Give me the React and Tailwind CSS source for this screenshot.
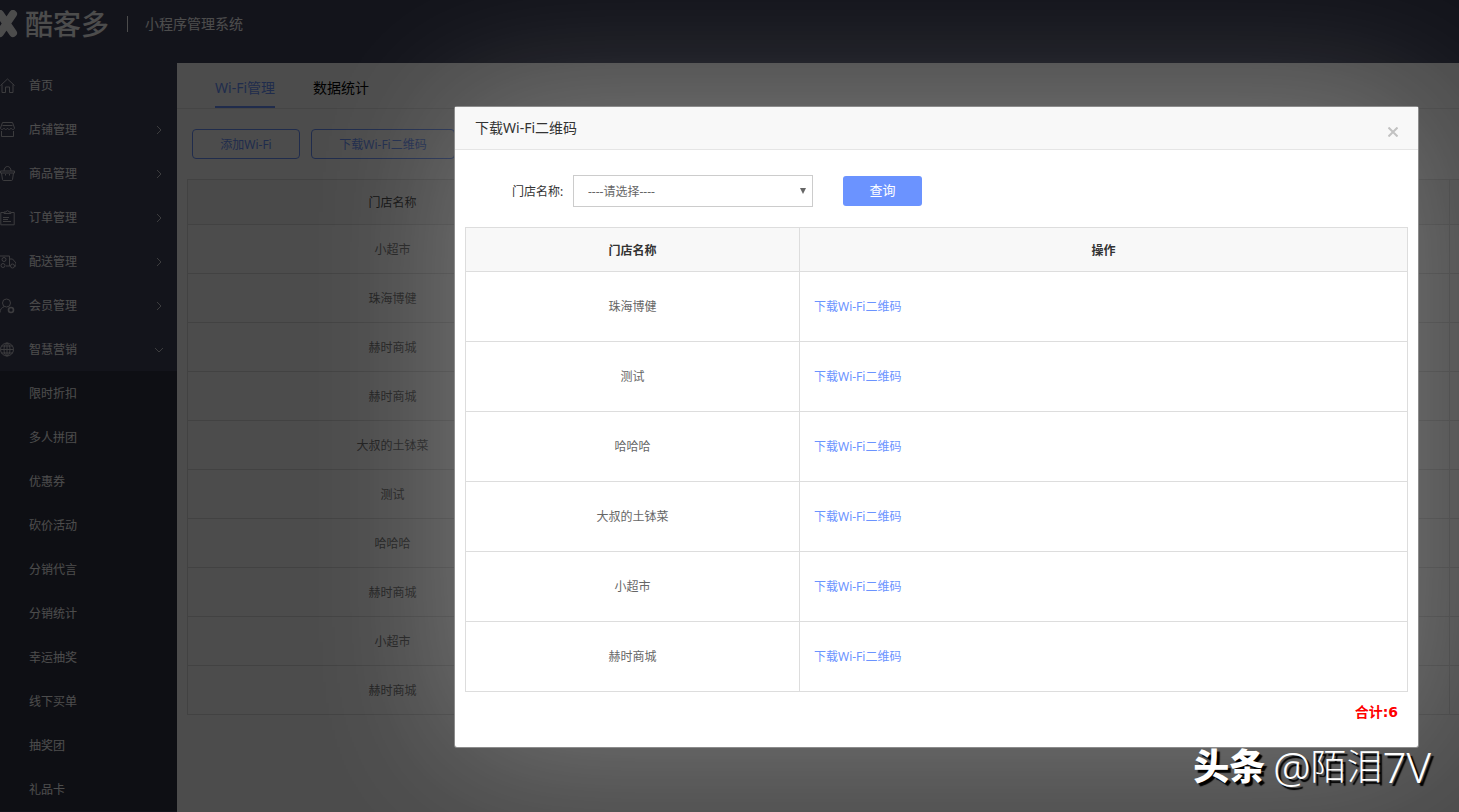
import { useState } from 'react';

const icons = {
  home: <path d="M.5 7.5 7.500 1l7 6.500M2 6.500v8h3.500V9h4v5.500H13v-8" />,
  shop: <path d="M2.500.5h10l2 5.500c0 2-3 2-3.500 0-.5 2-3 2-3.500 0-.5 2-3 2-3.500 0C3.500 8 .5 8 .5 6zM2.500 3.500h10M1.500 9v5.500h12V9" />,
  goods: <path d="M.5 5h14v2h-14zM1.500 7l1 6.500q.2 1 1 1h8q.8 0 1-1l1-6.500M4 5c0-6 7-6 7 0M5.500 8v1.500M9.500 8v1.500" />,
  order: <path d="M4 2.500H.8v12.300h13.400V2.500H11M4 3.500V2h2c.5-1.800 2.500-1.800 3 0h2v1.500zM3 7.500h6M3 9.500h5M3 11.500h8" />,
  truck: (
    <>
      <path d="M0 2h9.500v10H6M9.500 5h3l3.500 4v3h-1.500M9.500 12h1" />
      <circle cx="3" cy="11.5" r="2" />
      <circle cx="12.5" cy="12" r="2" />
      <circle cx="4" cy="5.5" r="2" />
    </>
  ),
  member: (
    <>
      <circle cx="6.5" cy="5" r="4" />
      <path d="M0 14.500C0 11 2 9.500 4.500 8.500" />
      <circle cx="11" cy="12" r="2.5" strokeWidth="1.6" />
    </>
  ),
  globe: (
    <>
      <circle cx="7" cy="7.5" r="6.5" />
      <ellipse cx="7" cy="7.5" rx="3" ry="6.5" />
      <path d="M7 1v13M.5 7.500h13M1.500 4h11M1.500 11h11" />
    </>
  ),
};

const menu = [
  { name: '首页', icon: 'home' },
  { name: '店铺管理', icon: 'shop', arrow: 'right' },
  { name: '商品管理', icon: 'goods', arrow: 'right' },
  { name: '订单管理', icon: 'order', arrow: 'right' },
  { name: '配送管理', icon: 'truck', arrow: 'right' },
  { name: '会员管理', icon: 'member', arrow: 'right' },
  { name: '智慧营销', icon: 'globe', arrow: 'down' },
];

const subMenu = ['限时折扣', '多人拼团', '优惠券', '砍价活动', '分销代言', '分销统计', '幸运抽奖', '线下买单', '抽奖团', '礼品卡'];

const wifiList = ['小超市', '珠海博健', '赫时商城', '赫时商城', '大叔的土钵菜', '测试', '哈哈哈', '赫时商城', '小超市', '赫时商城'];

const stores = ['珠海博健', '测试', '哈哈哈', '大叔的土钵菜', '小超市', '赫时商城'];

function Header() {
  return (
    <header className="h-[63px] shrink-0 bg-[#42435d] text-white">
      <div className="h-12 flex items-center">
        <svg className="w-[18px] h-7" viewBox="0 0 18 28" fill="none" stroke="currentColor" strokeWidth="8" strokeLinecap="round">
          <path d="M0 4 13 23M13 4 0 23" />
        </svg>
        <span className="ml-[7px] text-[28px] leading-none font-medium">酷客多</span>
        <span className="ml-[18px] w-px h-4 bg-white" />
        <span className="ml-[17px] text-sm">小程序管理系统</span>
      </div>
    </header>
  );
}

function Sidebar() {
  return (
    <nav className="w-[177px] shrink-0 bg-[#42435d] text-white text-xs">
      {menu.map((item) => (
        <a key={item.name} href="#" className="h-11 pt-0.5 flex items-center">
          <svg className="w-4 h-4 text-[#c8c8d0]" viewBox="0 0 16 16" fill="none" stroke="currentColor">
            {icons[item.icon]}
          </svg>
          <span className="ml-[13px] flex-1">{item.name}</span>
          {item.arrow && (
            <svg className="w-2 h-2 mr-3.5" viewBox="0 0 8 8" fill="none" stroke="#c8c8d0">
              {item.arrow === 'right' ? <path d="M2 0l4 4-4 4" /> : <path d="M0 2l4 4 4-4" />}
            </svg>
          )}
        </a>
      ))}
      <div className="bg-[#2f3243]">
        {subMenu.map((name) => (
          <a key={name} href="#" className="h-11 pt-0.5 pl-[29px] flex items-center">{name}</a>
        ))}
      </div>
    </nav>
  );
}

function WifiPage() {
  return (
    <main className="flex-1 min-w-0 overflow-hidden bg-white">
      <div className="h-[46px] pl-[38px] flex gap-[38px] border-b border-[#e6e6e6] text-sm">
        <a href="#" className="h-[45px] pt-1.5 flex items-center border-b-2 border-[#6b93ff] text-[#6b93ff]">Wi-Fi管理</a>
        <a href="#" className="h-[45px] pt-1.5 flex items-center border-b-2 border-transparent text-black">数据统计</a>
      </div>
      <div className="pt-5 pl-[15px] flex gap-[11px] text-xs text-[#6b93ff]">
        <button className="w-[108px] h-[30px] pt-0.5 rounded border border-[#6b93ff]">添加Wi-Fi</button>
        <button className="w-[144px] h-[30px] pt-0.5 rounded border border-[#6b93ff]">下载Wi-Fi二维码</button>
      </div>
      <div className="mt-5 pl-2.5">
        <table className="w-[calc(100%+80px)] table-fixed border-collapse text-xs text-center text-[#6a6a6a]">
          <thead>
            <tr className="h-[45px] bg-[#f8f8f8] text-[#333]">
              <th className="w-[410px] pt-0.5 border border-[#dcdcdc] font-normal">门店名称</th>
              <th className="border border-[#dcdcdc]" />
              <th className="w-[89px] border border-[#dcdcdc]" />
            </tr>
          </thead>
          <tbody>
            {wifiList.map((name, i) => (
              <tr key={i} className="h-[49px]">
                <td className="pt-0.5 border border-[#dcdcdc]">{name}</td>
                <td className="border border-[#dcdcdc]" />
                <td className="border border-[#dcdcdc]" />
              </tr>
            ))}
          </tbody>
        </table>
      </div>
    </main>
  );
}

function DownloadDialog({ onClose }) {
  return (
    <div
      role="dialog"
      aria-label="下载Wi-Fi二维码"
      className="absolute top-[107px] left-[455px] right-[41px] pb-[25px] rounded-xs bg-white text-xs shadow-[0_0_0_1px_#8c8c8c,0_0_150px_rgba(255,255,255,0.26)]"
    >
      <div className="h-[43px] px-5 flex justify-between border-b border-[#e5e5e5] bg-[#f8f8f8]">
        <h2 className="leading-[42px] text-sm text-[#333]">下载Wi-Fi二维码</h2>
        <button aria-label="关闭" className="pt-2" onClick={onClose}>
          <svg className="w-2.5 h-2.5" viewBox="0 0 10 10" fill="none" stroke="#c2c2c2" strokeWidth="2">
            <path d="M.5.5l9 9M9.500.5l-9 9" />
          </svg>
        </button>
      </div>

      <form className="pt-[25px] pl-[57px] flex items-center" onSubmit={(e) => e.preventDefault()}>
        <label htmlFor="store" className="w-[61px] pt-0.5 text-[#333]">门店名称:</label>
        <div className="relative">
          <select id="store" className="block w-60 h-8 pt-0.5 pl-3.5 appearance-none border border-[#ccc] bg-white text-[#666]">
            <option>----请选择----</option>
            {stores.map((name) => (
              <option key={name}>{name}</option>
            ))}
          </select>
          <svg className="absolute right-1.5 top-3 w-2 h-2 pointer-events-none" viewBox="0 0 8 8" fill="#666">
            <path d="M1 1h6L4 7z" />
          </svg>
        </div>
        <button className="ml-[30px] w-[79px] h-[30px] rounded-[3px] bg-[#6b93ff] text-[13px] text-white">查询</button>
      </form>

      <div className="mt-5 px-2.5">
        <table className="w-full table-fixed border-collapse">
          <thead>
            <tr className="h-11 bg-[#f8f8f8] text-[#333]">
              <th className="w-[334px] pt-0.5 border border-[#ddd] font-bold">门店名称</th>
              <th className="pt-0.5 border border-[#ddd] font-bold">操作</th>
            </tr>
          </thead>
          <tbody>
            {stores.map((name) => (
              <tr key={name} className="h-[70px]">
                <td className="border border-[#ddd] text-center text-[#666]">{name}</td>
                <td className="pl-3.5 border border-[#ddd]">
                  <a href="#" className="text-[#6b93ff]">下载Wi-Fi二维码</a>
                </td>
              </tr>
            ))}
          </tbody>
        </table>
        <p className="h-[30px] pt-2.5 pr-2.5 text-right text-sm font-bold text-[#f00] font-['DejaVu_Sans','Noto_Sans_CJK_SC',sans-serif]">合计:6</p>
      </div>
    </div>
  );
}

export default function App() {
  const [open, setOpen] = useState(true);

  return (
    <div className="relative h-screen flex flex-col overflow-hidden bg-white font-['Noto_Sans','Noto_Sans_CJK_SC',sans-serif]">
      <Header />
      <div className="flex-1 flex">
        <Sidebar />
        <WifiPage />
      </div>

      {open && (
        <div className="absolute inset-0 bg-black/70">
          <DownloadDialog onClose={() => setOpen(false)} />
        </div>
      )}

      <div className="absolute right-7 bottom-6 flex items-center gap-2 text-4xl leading-none text-white [text-shadow:3px_3px_1px_#000]">
        <span className="font-black">头条</span>
        <span className="flex items-center font-light">
          <span className="text-[42px]">@</span>陌泪<span className="text-[42px]">7V</span>
        </span>
      </div>
    </div>
  );
}
